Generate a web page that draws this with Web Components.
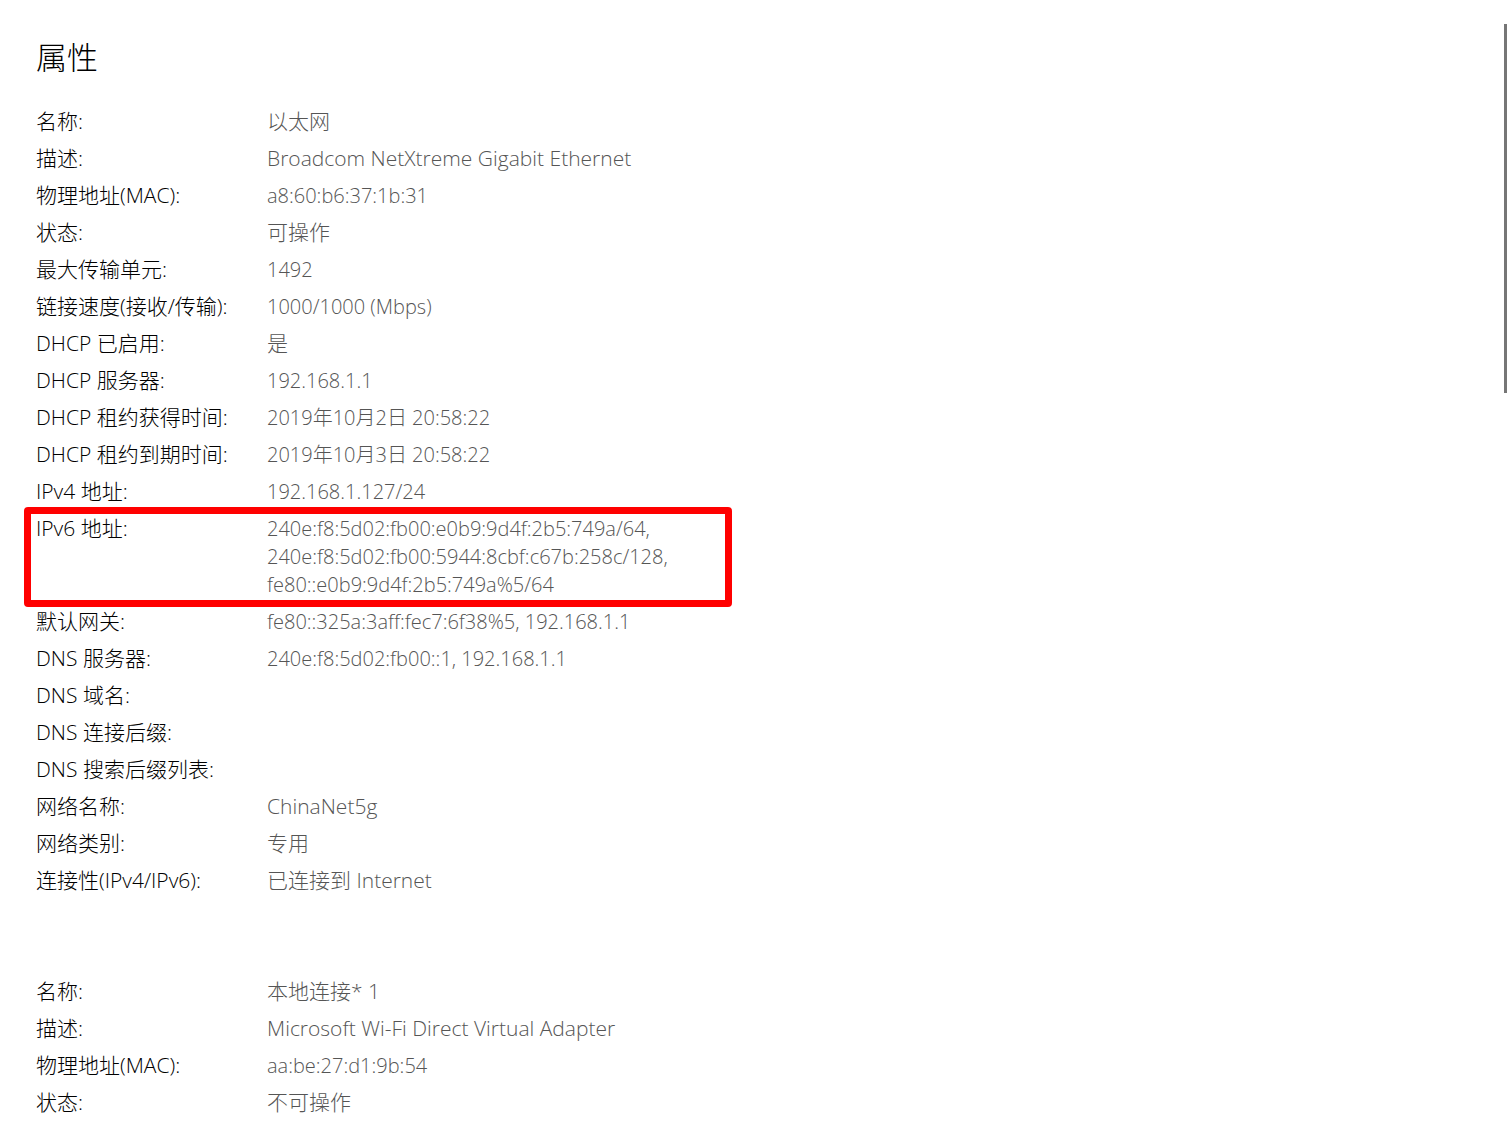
<!DOCTYPE html>
<html lang="zh-CN">
<head>
<meta charset="utf-8">
<meta name="viewport" content="width=device-width, initial-scale=1">
<title>属性</title>
<style>
  body {
    margin: 0;
    background: #fff;
    color: #000;
    font-family: "Open Sans", "Noto Sans CJK SC", sans-serif;
    font-size: 21px;
    font-weight: 300;
    line-height: 28px;
  }
</style>
</head>
<body>
<settings-page>
  <span slot="title">属性</span>
  <property-list>
    <property-row label="名称:">以太网</property-row>
    <property-row label="描述:">Broadcom NetXtreme Gigabit Ethernet</property-row>
    <property-row label="物理地址(MAC):" numeric>a8:60:b6:37:1b:31</property-row>
    <property-row label="状态:">可操作</property-row>
    <property-row label="最大传输单元:" numeric>1492</property-row>
    <property-row label="链接速度(接收/传输):" numeric>1000/1000 (Mbps)</property-row>
    <property-row label="DHCP 已启用:">是</property-row>
    <property-row label="DHCP 服务器:" numeric>192.168.1.1</property-row>
    <property-row label="DHCP 租约获得时间:" numeric>2019年10月2日 20:58:22</property-row>
    <property-row label="DHCP 租约到期时间:" numeric>2019年10月3日 20:58:22</property-row>
    <property-row label="IPv4 地址:" numeric>192.168.1.127/24</property-row>
    <property-row label="IPv6 地址:" numeric marked>240e:f8:5d02:fb00:e0b9:9d4f:2b5:749a/64,<br>240e:f8:5d02:fb00:5944:8cbf:c67b:258c/128,<br>fe80::e0b9:9d4f:2b5:749a%5/64</property-row>
    <property-row label="默认网关:" numeric>fe80::325a:3aff:fec7:6f38%5, 192.168.1.1</property-row>
    <property-row label="DNS 服务器:" numeric>240e:f8:5d02:fb00::1, 192.168.1.1</property-row>
    <property-row label="DNS 域名:"></property-row>
    <property-row label="DNS 连接后缀:"></property-row>
    <property-row label="DNS 搜索后缀列表:"></property-row>
    <property-row label="网络名称:">ChinaNet5g</property-row>
    <property-row label="网络类别:">专用</property-row>
    <property-row label="连接性(IPv4/IPv6):">已连接到 Internet</property-row>
  </property-list>
  <property-list>
    <property-row label="名称:">本地连接* 1</property-row>
    <property-row label="描述:">Microsoft Wi-Fi Direct Virtual Adapter</property-row>
    <property-row label="物理地址(MAC):" numeric>aa:be:27:d1:9b:54</property-row>
    <property-row label="状态:">不可操作</property-row>
  </property-list>
</settings-page>

<script>
  function define(name, html, setup) {
    const template = document.createElement('template');
    template.innerHTML = html;
    customElements.define(name, class extends HTMLElement {
      constructor() {
        super();
        this.attachShadow({ mode: 'open' }).append(template.content.cloneNode(true));
      }
      connectedCallback() {
        if (setup) setup(this);
      }
    });
  }

  define('scroll-rail', `
    <style>
      :host { display: block; box-sizing: border-box; width: 6px; padding: 24px 3px 0 0; }
      .thumb { height: 33.4%; background: #767676; }
    </style>
    <div class="thumb"></div>`);

  define('settings-page', `
    <style>
      :host { display: flex; height: 100vh; overflow: hidden; }
      main { flex: 1; min-width: 0; padding: 35px 36px 0; }
      h1 { margin: 0 0 28px; font-size: 31px; font-weight: 300; line-height: 44px; }
      .groups { display: flex; flex-direction: column; gap: 83px; }
    </style>
    <main>
      <h1><slot name="title"></slot></h1>
      <div class="groups"><slot></slot></div>
    </main>
    <scroll-rail></scroll-rail>`);

  define('property-list', `
    <style>
      :host { display: flex; flex-direction: column; gap: 9px; max-width: 684px; }
    </style>
    <slot></slot>`);

  define('property-row', `
    <style>
      :host { display: block; position: relative; }
      dl { display: grid; grid-template-columns: 231px 1fr; margin: 0; min-height: 28px; }
      dt { white-space: nowrap; }
      dd { margin: 0; color: #555; }
      :host([numeric]) .value { font-size: 20px; line-height: 20px; }
      :host([marked])::after {
        content: "";
        position: absolute;
        inset: -7px -12px -9px;
        border: 7px solid #f00;
        border-radius: 4px;
      }
    </style>
    <dl><dt></dt><dd><span class="value"><slot></slot></span></dd></dl>`,
    row => { row.shadowRoot.querySelector('dt').textContent = row.getAttribute('label'); });
</script>
</body>
</html>
